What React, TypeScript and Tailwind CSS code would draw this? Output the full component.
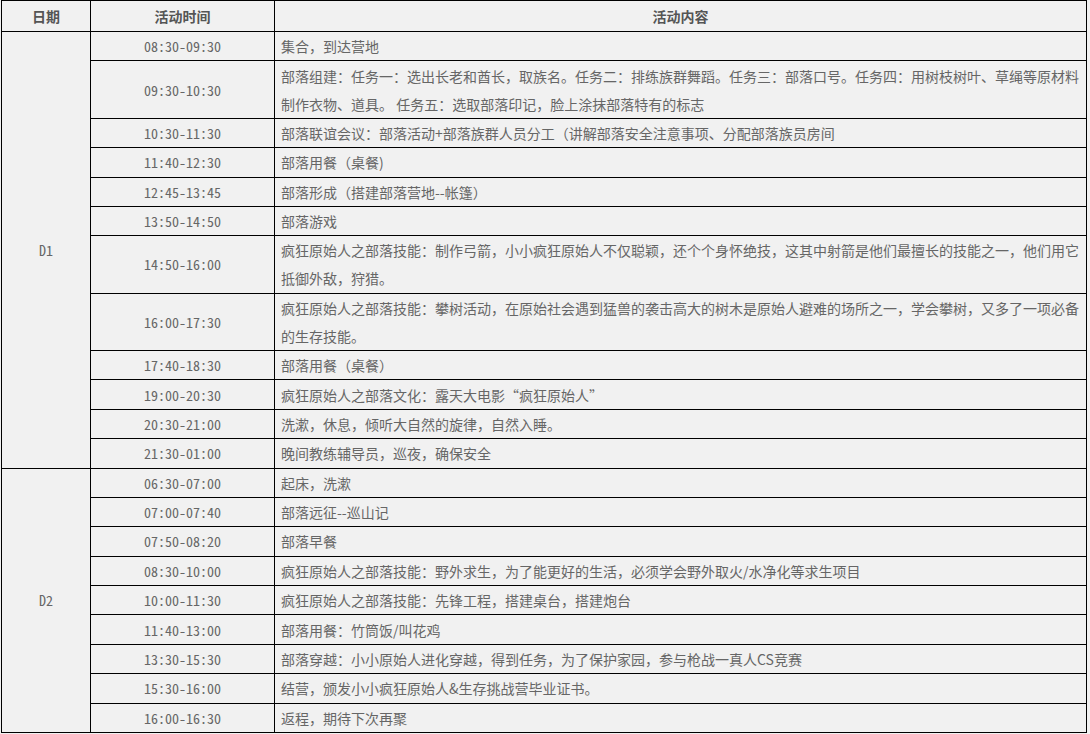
import React from "react";

type Row = { time: string; content: React.ReactNode };

const d1: Row[] = [
  { time: "08:30-09:30", content: "集合，到达营地" },
  {
    time: "09:30-10:30",
    content: (
      <>
        部落组建：任务一：选出长老和酋长，取族名。任务二：排练族群舞蹈。任务三：部落口号。任务四：用树枝树叶、草绳等原材料
        <br />
        制作衣物、道具。 任务五：选取部落印记，脸上涂抹部落特有的标志
      </>
    ),
  },
  { time: "10:30-11:30", content: "部落联谊会议：部落活动+部落族群人员分工（讲解部落安全注意事项、分配部落族员房间" },
  { time: "11:40-12:30", content: "部落用餐（桌餐)" },
  { time: "12:45-13:45", content: "部落形成（搭建部落营地--帐篷）" },
  { time: "13:50-14:50", content: "部落游戏" },
  {
    time: "14:50-16:00",
    content: (
      <>
        疯狂原始人之部落技能：制作弓箭，小小疯狂原始人不仅聪颖，还个个身怀绝技，这其中射箭是他们最擅长的技能之一，他们用它
        <br />
        抵御外敌，狩猎。
      </>
    ),
  },
  {
    time: "16:00-17:30",
    content: (
      <>
        疯狂原始人之部落技能：攀树活动，在原始社会遇到猛兽的袭击高大的树木是原始人避难的场所之一，学会攀树，又多了一项必备
        <br />
        的生存技能。
      </>
    ),
  },
  { time: "17:40-18:30", content: "部落用餐（桌餐）" },
  { time: "19:00-20:30", content: "疯狂原始人之部落文化：露天大电影“疯狂原始人”" },
  { time: "20:30-21:00", content: "洗漱，休息，倾听大自然的旋律，自然入睡。" },
  { time: "21:30-01:00", content: "晚间教练辅导员，巡夜，确保安全" },
];

const d2: Row[] = [
  { time: "06:30-07:00", content: "起床，洗漱" },
  { time: "07:00-07:40", content: "部落远征--巡山记" },
  { time: "07:50-08:20", content: "部落早餐" },
  { time: "08:30-10:00", content: "疯狂原始人之部落技能：野外求生，为了能更好的生活，必须学会野外取火/水净化等求生项目" },
  { time: "10:00-11:30", content: "疯狂原始人之部落技能：先锋工程，搭建桌台，搭建炮台" },
  { time: "11:40-13:00", content: "部落用餐：竹筒饭/叫花鸡" },
  { time: "13:30-15:30", content: "部落穿越：小小原始人进化穿越，得到任务，为了保护家园，参与枪战一真人CS竞赛" },
  { time: "15:30-16:00", content: "结营，颁发小小疯狂原始人&生存挑战营毕业证书。" },
  { time: "16:00-16:30", content: "返程，期待下次再聚" },
];

const cell = "border border-black leading-[28px] py-[0.2px]";
const mono = "font-['Noto_Sans_Mono_CJK_SC','Liberation_Mono',monospace]";

function DayRows({ day, rows }: { day: string; rows: Row[] }) {
  return (
    <>
      {rows.map((r, i) => (
        <tr key={r.time + i}>
          {i === 0 && (
            <td rowSpan={rows.length} className={`${cell} ${mono} text-center align-middle`}>
              {day}
            </td>
          )}
          <td className={`${cell} ${mono} text-center`}>{r.time}</td>
          <td className={`${cell} px-[6px] whitespace-nowrap`}>{r.content}</td>
        </tr>
      ))}
    </>
  );
}

export default function App() {
  return (
    <div className="w-[1090px] h-[734px] bg-[#f1f1f1] overflow-hidden font-['Noto_Sans_CJK_SC',sans-serif] text-[14px] text-[#666]">
      <table className="ml-[1px] w-[1086px] border-collapse table-fixed">
        <colgroup>
          <col className="w-[89px]" />
          <col className="w-[184px]" />
          <col />
        </colgroup>
        <thead>
          <tr>
            <th className="border border-black leading-[28px] py-[1px] font-bold text-[#555]">日期</th>
            <th className="border border-black leading-[28px] py-[1px] font-bold text-[#555]">活动时间</th>
            <th className="border border-black leading-[28px] py-[1px] font-bold text-[#555]">活动内容</th>
          </tr>
        </thead>
        <tbody>
          <DayRows day="D1" rows={d1} />
          <DayRows day="D2" rows={d2} />
        </tbody>
      </table>
    </div>
  );
}
